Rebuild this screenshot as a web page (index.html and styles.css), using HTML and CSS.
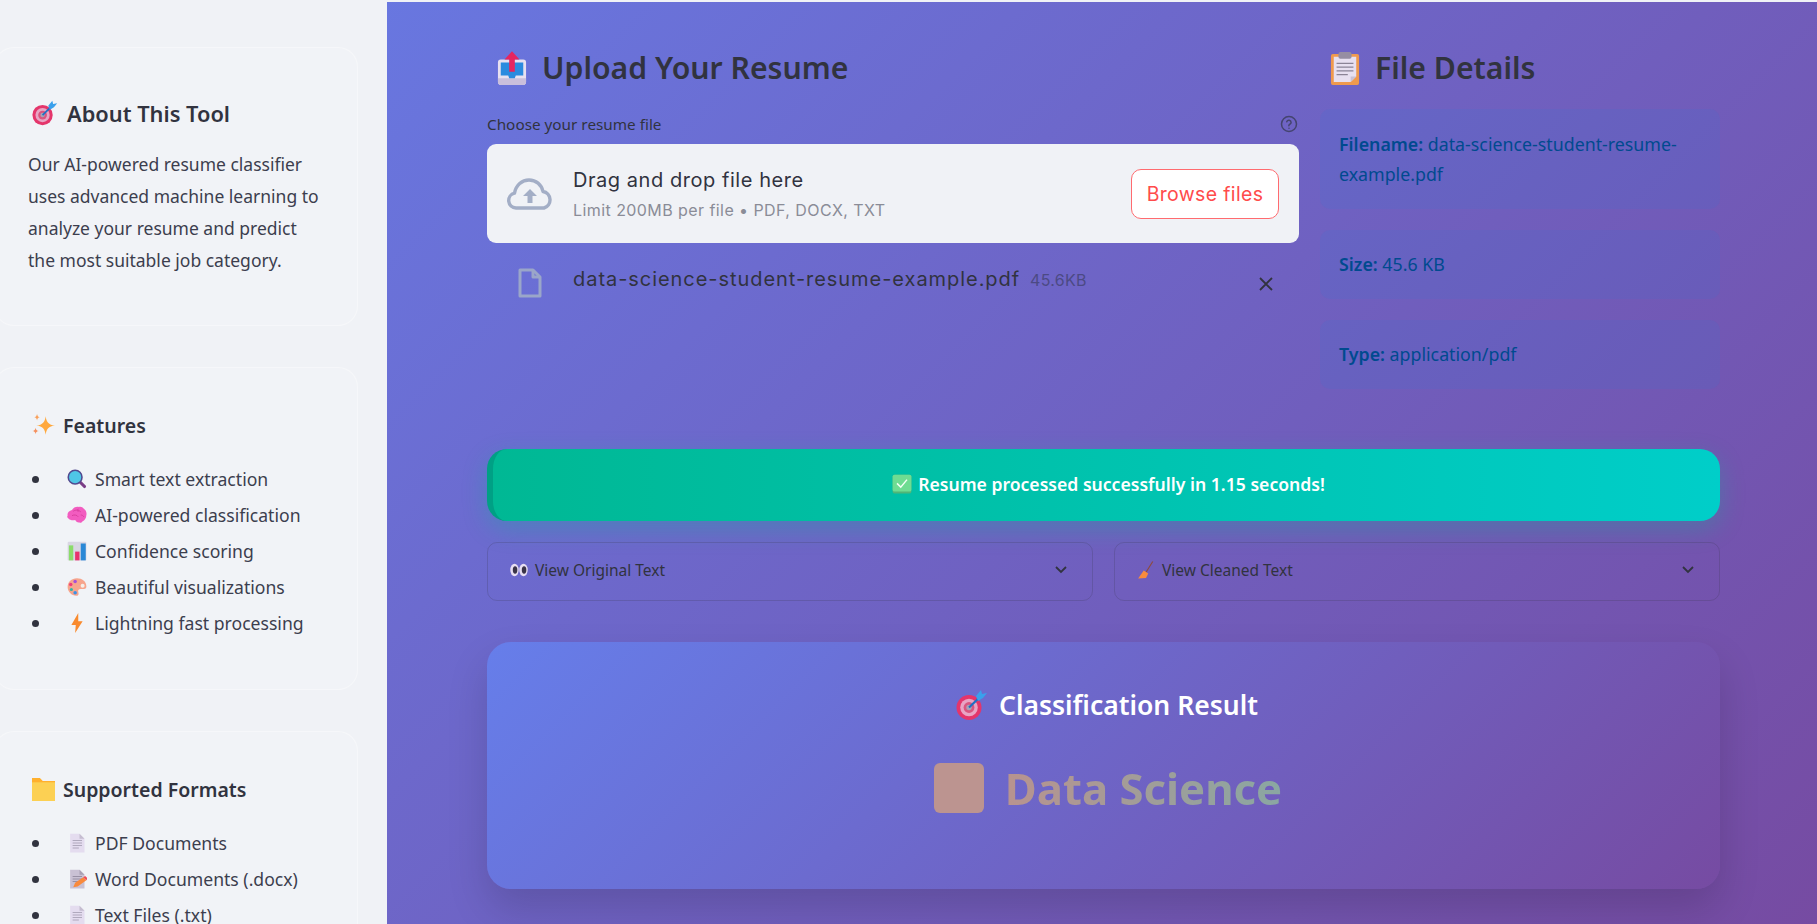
FILE: index.html
```html
<!DOCTYPE html>
<html lang="en">
<head>
  <meta charset="UTF-8">
  <meta name="viewport" content="width=device-width, initial-scale=1.0">
  <title>Resume Classifier</title>
  <link rel="stylesheet" href="styles.css">
</head>
<body>

  <!-- Emoji drawings, reused below -->
  <svg class="sprites" aria-hidden="true">
    <symbol id="e-target" viewBox="0 0 32 32">
      <circle cx="13" cy="18.500" r="12.500" fill="#e4356b"/>
      <circle cx="13" cy="18.500" r="8.800" fill="#e8a4c4"/>
      <circle cx="13" cy="18.500" r="5.400" fill="#d9557f"/>
      <circle cx="13" cy="18.500" r="2.700" fill="#a9a3b5"/>
      <path d="M13 18.500 25 7" stroke="#1f6fc4" stroke-width="2.200"/>
      <path d="M20 7l5-6 1 4 5-1-4 5-5 3z" fill="#3aa0ec"/>
    </symbol>
    <symbol id="e-sparkles" viewBox="0 0 32 32">
      <path d="M19 3c1 8 4 12 13 13-9 1-12 5-13 13-1-8-4-12-13-13 9-1 12-5 13-13z" fill="#ffa83d"/>
      <path d="M7 0c.5 3 1.500 4 4 4.500-2.500.5-3.500 1.500-4 4.500-.5-3-1.500-4-4-4.500 2.500-.5 3.500-1.500 4-4.500z" fill="#f9a05a"/>
      <path d="M5 19c.5 3 1.500 4 4.500 4.500-3 .5-4 1.500-4.500 4.500-.5-3-1.500-4-4.500-4.500 3-.5 4-1.500 4.500-4.500z" fill="#f58f5c"/>
    </symbol>
    <symbol id="e-search" viewBox="0 0 32 32">
      <path d="M20 20l8 8" stroke="#7a3c86" stroke-width="5" stroke-linecap="round"/>
      <circle cx="13" cy="13" r="11" fill="#4fc6e6" stroke="#51488f" stroke-width="2.500"/>
    </symbol>
    <symbol id="e-brain" viewBox="0 0 32 32">
      <path d="M8 8c2-4 7-6 11-5 3-1 6 0 8 3 3 2 5 6 4 10 0 5-3 9-6 10-1 2-3 3-5 2-3 1-6-2-7-4-4 1-9 0-11-3-2-1-2-3-1-4-1-4 2-8 7-9z" fill="#f25cc0"/>
      <path d="M10 10c4-3 9-2 12 1M8 17c4-2 8-1 10 2M22 16c2 0 4 1 5 3M18 6c-1 2-1 3 0 5" stroke="#d83e9e" stroke-width="1.500" fill="none"/>
    </symbol>
    <symbol id="e-chart" viewBox="0 0 32 32">
      <rect x="1" y="1" width="30" height="30" rx="2" fill="#d9d6e3"/>
      <rect x="3" y="7" width="7" height="24" fill="#8bdc6b"/>
      <rect x="13" y="17" width="7" height="14" fill="#e8336e"/>
      <rect x="22" y="4" width="8" height="27" fill="#2a88d6"/>
    </symbol>
    <symbol id="e-palette" viewBox="0 0 32 32">
      <path d="M16 2C7 2 1 8 1 16c0 7 6 14 14 14 4 0 4-3 3-6-1-3 1-5 4-5h5c3 0 4-2 4-4C31 7 24 2 16 2z" fill="#f7a58d"/>
      <circle cx="25" cy="14" r="3.200" fill="#f4efe9"/>
      <circle cx="13" cy="7" r="2.800" fill="#a64fd8"/>
      <circle cx="6" cy="12" r="2.800" fill="#ef3e79"/>
      <circle cx="7" cy="20" r="2.500" fill="#2fb8a8"/>
      <circle cx="13" cy="25" r="2.800" fill="#3a92e8"/>
    </symbol>
    <symbol id="e-bolt" viewBox="0 0 32 32">
      <path d="M18 0 7 19h7l-1 13 12-19h-7z" fill="#f98a2e"/>
    </symbol>
    <symbol id="e-folder" viewBox="0 0 32 32">
      <path d="M0 0h11l4 4h17v28H0z" fill="#ffb02e"/>
      <path d="M0 6h32v26H0z" fill="#fcd053"/>
    </symbol>
    <symbol id="e-page" viewBox="0 0 32 32">
      <path d="M5 1h15l8 8v22H5z" fill="#e4dcef"/>
      <path d="M20 1l8 8h-8z" fill="#c5bdd0"/>
      <path d="M9 12h15M9 16h15M9 20h15M9 24h10" stroke="#a49cb1" stroke-width="1.300"/>
    </symbol>
    <symbol id="e-write" viewBox="0 0 32 32">
      <path d="M5 1h15l8 8v22H5z" fill="#c9c1d4"/>
      <path d="M20 1l8 8h-8z" fill="#a9a1b4"/>
      <path d="M9 12h15M9 16h15M9 20h10" stroke="#8d859a" stroke-width="1.300"/>
      <path d="M10 29l3-7 13-9 5 5-14 10z" fill="#f98a3c"/>
      <path d="M26 13l5 5 2-3-4-4z" fill="#ef4d5a"/>
    </symbol>
    <symbol id="e-outbox" viewBox="0 0 32 36">
      <rect x="1" y="9" width="30" height="27" rx="3" fill="#e7e1f0"/>
      <path d="M1 29h30v4a3 3 0 0 1-3 3H4a3 3 0 0 1-3-3z" fill="#c9bfdc"/>
      <path d="M4 12h24v14h-8l-1 3h-6l-1-3H4z" fill="#2b8bdf"/>
      <path d="M16 0l8 9h-5v13h-6V9H8z" fill="#e6255f"/>
    </symbol>
    <symbol id="e-clipboard" viewBox="0 0 32 36">
      <rect x="1" y="3" width="30" height="33" rx="2" fill="#ef9a4e"/>
      <path d="M4 6h24v21l-6 6H4z" fill="#e7e0f0"/>
      <path d="M22 33v-6h6z" fill="#c9c1d4"/>
      <rect x="9" y="1" width="14" height="7" rx="2" fill="#968ea2"/>
      <path d="M7 13h18M7 17h18M7 21h18M7 25h12" stroke="#8b8496" stroke-width="1.300"/>
    </symbol>
    <symbol id="e-check" viewBox="0 0 32 32">
      <rect x="1" y="1" width="30" height="30" rx="3" fill="#50b577"/>
      <rect x="1" y="1" width="30" height="27" rx="3" fill="#6fdc92"/>
      <path d="M8 15l6 6 10-12" fill="none" stroke="#f2fff5" stroke-width="2.400"/>
    </symbol>
    <symbol id="e-eyes" viewBox="0 0 32 32">
      <ellipse cx="8" cy="16" rx="7.500" ry="11" fill="#e7def2"/>
      <ellipse cx="24" cy="16" rx="7.500" ry="11" fill="#e7def2"/>
      <ellipse cx="9" cy="16" rx="4" ry="6.500" fill="#3a3448"/>
      <ellipse cx="25" cy="16" rx="4" ry="6.500" fill="#3a3448"/>
    </symbol>
    <symbol id="e-broom" viewBox="0 0 32 32">
      <path d="M28 1 16 20" stroke="#8f4a3a" stroke-width="2"/>
      <path d="M12 17l8 5-4 8-14 1z" fill="#f98b3c"/>
    </symbol>
  </svg>

  <div class="app">

    <!-- Sidebar -->
    <aside class="sidebar">
      <section class="side-card about">
        <h3 class="side-title big"><svg class="emoji e26"><use href="#e-target"/></svg>About This Tool</h3>
        <p>Our AI-powered resume classifier uses advanced machine learning to analyze your resume and predict the most suitable job category.</p>
      </section>

      <section class="side-card features">
        <h3 class="side-title"><svg class="emoji e22"><use href="#e-sparkles"/></svg>Features</h3>
        <ul class="side-list">
          <li><svg class="emoji e20"><use href="#e-search"/></svg>Smart text extraction</li>
          <li><svg class="emoji e20"><use href="#e-brain"/></svg>AI-powered classification</li>
          <li><svg class="emoji e20"><use href="#e-chart"/></svg>Confidence scoring</li>
          <li><svg class="emoji e20"><use href="#e-palette"/></svg>Beautiful visualizations</li>
          <li><svg class="emoji e20"><use href="#e-bolt"/></svg>Lightning fast processing</li>
        </ul>
      </section>

      <section class="side-card formats">
        <h3 class="side-title"><svg class="emoji e22"><use href="#e-folder"/></svg>Supported Formats</h3>
        <ul class="side-list">
          <li><svg class="emoji e20"><use href="#e-page"/></svg>PDF Documents</li>
          <li><svg class="emoji e20"><use href="#e-write"/></svg>Word Documents (.docx)</li>
          <li><svg class="emoji e20"><use href="#e-page"/></svg>Text Files (.txt)</li>
        </ul>
      </section>
    </aside>

    <!-- Main area -->
    <main class="main">
      <div class="top-strip"></div>

      <div class="columns">
        <div class="upload-col">
          <h2 class="section-title"><svg class="emoji e34"><use href="#e-outbox"/></svg>Upload Your Resume</h2>

          <div class="file-label">
            <span>Choose your resume file</span>
            <svg class="help" viewBox="0 0 24 24" fill="none" stroke="#44446f" stroke-width="2" stroke-linecap="round">
              <circle cx="12" cy="12" r="10"/>
              <path d="M9 9a3 3 0 0 1 5.800 1c0 2-3 2.500-3 4.200"/>
              <path d="M12 17.500v.1"/>
            </svg>
          </div>

          <div class="dropzone">
            <svg class="cloud" viewBox="0 0 46 32" fill="none" stroke="#a3aec6" stroke-width="3.400" stroke-linejoin="round">
              <path d="M11 30H9a7.500 7.500 0 0 1-1.500-14.800C9 7 15 2 22 2c7 0 12.500 4.500 14 11.500a8.500 8.500 0 0 1 1 16.500z"/>
              <path d="M23 11l7 7h-4.500v7h-5v-7H16z" fill="#a3aec6" stroke="none"/>
            </svg>
            <div class="drop-text">
              <div class="drop-main">Drag and drop file here</div>
              <div class="drop-sub">Limit 200MB per file • PDF, DOCX, TXT</div>
            </div>
            <button class="browse" type="button">Browse files</button>
          </div>

          <div class="file-row">
            <svg class="file-icon" viewBox="0 0 24 30" fill="none" stroke="#9aa6c9" stroke-width="3" stroke-linejoin="round">
              <path d="M2 2h13l7 7v19H2z"/>
              <path d="M15 2v7h7"/>
            </svg>
            <span class="file-name">data-science-student-resume-example.pdf</span>
            <span class="file-size">45.6KB</span>
            <svg class="file-close" viewBox="0 0 16 16" stroke="#31333f" stroke-width="1.800">
              <path d="M2 2l12 12M14 2 2 14"/>
            </svg>
          </div>
        </div>

        <div class="details-col">
          <h2 class="section-title"><svg class="emoji e34"><use href="#e-clipboard"/></svg>File Details</h2>
          <div class="info-box tall"><strong>Filename:</strong> data-science-student-resume-example.pdf</div>
          <div class="info-box"><strong>Size:</strong> 45.6 KB</div>
          <div class="info-box"><strong>Type:</strong> application/pdf</div>
        </div>
      </div>

      <div class="success"><svg class="emoji e20"><use href="#e-check"/></svg>Resume processed successfully in 1.15 seconds!</div>

      <div class="expanders">
        <div class="expander">
          <svg class="emoji e18"><use href="#e-eyes"/></svg>
          <span>View Original Text</span>
          <svg class="chevron" viewBox="0 0 12 8" fill="none" stroke="#31333f" stroke-width="1.800"><path d="M1 1l5 5 5-5"/></svg>
        </div>
        <div class="expander">
          <svg class="emoji e18"><use href="#e-broom"/></svg>
          <span>View Cleaned Text</span>
          <svg class="chevron" viewBox="0 0 12 8" fill="none" stroke="#31333f" stroke-width="1.800"><path d="M1 1l5 5 5-5"/></svg>
        </div>
      </div>

      <section class="result">
        <h2 class="result-title"><svg class="emoji e30"><use href="#e-target"/></svg>Classification Result</h2>
        <div class="result-value">
          <span class="tofu"></span>
          <span class="result-name">Data Science</span>
        </div>
      </section>
    </main>

  </div>

</body>
</html>
```

FILE: styles.css
```css
/* General Reset */
* {
  margin: 0;
  padding: 0;
  box-sizing: border-box;
}

body {
  font-family: "Noto Sans", Arial, sans-serif;
  color: #31333f;
  overflow: hidden;
}

.sprites {
  display: none;
}

.app {
  display: grid;
  grid-template-columns: 387px 1fr;
  height: 924px;
  overflow: hidden;
  background: linear-gradient(135deg, #667eea 0%, #764ba2 100%);
}

/* Emoji sizes */
.emoji {
  flex: none;
}

.e18 { width: 18px; height: 18px; }
.e20 { width: 20px; height: 20px; }
.e22 { width: 23px; height: 23px; }
.e26 { width: 26px; height: 26px; }
.e30 { width: 32px; height: 32px; }
.e34 { width: 30px; height: 34px; }

/* Sidebar */
.sidebar {
  background: #f0f2f6;
  height: 924px;
  overflow: hidden;
  padding-top: 47px;
}

.side-card {
  width: 364px;
  margin-left: -6px;
  padding-left: 33px;
  padding-right: 20px;
  border: 1px solid rgba(255, 255, 255, 0.35);
  border-radius: 20px;
  background: rgba(255, 255, 255, 0.1);
}

.about {
  height: 279px;
  padding-top: 50px;
  margin-bottom: 41px;
}

.features {
  height: 323px;
  padding-top: 45px;
  margin-bottom: 41px;
}

.formats {
  height: 300px;
  padding-top: 45px;
}

.side-title {
  display: flex;
  align-items: center;
  gap: 8px;
  height: 24px;
  padding-left: 4px;
  font-size: 19.500px;
  font-weight: 600;
}

.side-title.big {
  gap: 9px;
  height: 30px;
  font-size: 21.800px;
}

.about p {
  max-width: 296px;
  margin-top: 20px;
  font-size: 17.500px;
  line-height: 32px;
  color: #3c3e4e;
}

.side-list {
  margin-top: 24px;
  list-style: none;
}

.side-list li {
  display: flex;
  align-items: center;
  height: 36px;
  font-size: 17.600px;
  color: #3c3e4e;
}

.side-list li::before {
  content: "";
  flex: none;
  width: 7px;
  height: 7px;
  margin-left: 4px;
  margin-right: 28px;
  border-radius: 50%;
  background: #31333f;
}

.side-list .emoji {
  margin-right: 8px;
}

/* Main */
.main {
  padding: 0 97px 0 100px;
  min-width: 0;
}

.top-strip {
  height: 2px;
  margin: 0 -97px 0 -100px;
  background: #f0f2f6;
}

.columns {
  display: grid;
  grid-template-columns: 812px 400px;
  gap: 21px;
  height: 447px;
}

.section-title {
  display: flex;
  align-items: center;
  gap: 15px;
  height: 42px;
  margin-top: 45px;
  padding-left: 10px;
  font-size: 30.200px;
  font-weight: 600;
  line-height: 44px;
}

/* Uploader */
.file-label {
  display: flex;
  justify-content: space-between;
  align-items: center;
  height: 20px;
  margin-top: 25px;
  font-size: 15.300px;
}

.help {
  width: 18px;
  height: 18px;
  margin-right: 1px;
}

.dropzone {
  display: flex;
  align-items: center;
  height: 99px;
  margin-top: 10px;
  padding: 0 20px;
  border-radius: 9px;
  background: #f0f2f6;
}

.cloud {
  flex: none;
  width: 46px;
  height: 32px;
}

.drop-text {
  flex: 1;
  margin-left: 20px;
  margin-top: 4px;
  font-family: Inter, Arial, sans-serif;
}

.drop-main {
  font-size: 20px;
  letter-spacing: 0.550px;
  line-height: 30px;
}

.drop-sub {
  font-size: 16px;
  letter-spacing: 0.430px;
  line-height: 31px;
  color: #8a8c97;
}

.browse {
  width: 148px;
  height: 50px;
  border: 1px solid #ff6b6f;
  border-radius: 10px;
  background: #fff;
  color: #ff4b4b;
  font-family: Inter, Arial, sans-serif;
  font-size: 19.500px;
  letter-spacing: 0.350px;
}

.file-row {
  display: flex;
  align-items: center;
  height: 30px;
  margin-top: 25px;
  padding-left: 31px;
  font-family: Inter, Arial, sans-serif;
}

.file-icon {
  flex: none;
  width: 24px;
  height: 30px;
}

.file-name {
  margin-left: 31px;
  margin-bottom: 8px;
  font-size: 20px;
  letter-spacing: 0.950px;
}

.file-size {
  margin-left: 10px;
  margin-bottom: 6px;
  font-size: 16px;
  letter-spacing: 0.300px;
  color: #4c4a84;
}

.file-close {
  width: 16px;
  height: 16px;
  margin-left: auto;
  margin-right: 25px;
  margin-top: 2px;
}

/* File details */
.info-box {
  height: 69px;
  margin-top: 21px;
  padding: 0 19px;
  border-radius: 10px;
  background: rgba(28, 131, 225, 0.1);
  font-size: 17.800px;
  line-height: 69px;
  color: #004a8f;
}

.info-box.tall {
  height: 100px;
  margin-top: 20px;
  padding-top: 20px;
  line-height: 30px;
}

.info-box strong {
  font-weight: 600;
}

/* Success banner */
.success {
  display: flex;
  justify-content: center;
  align-items: center;
  gap: 6px;
  height: 72px;
  padding-bottom: 2px;
  padding-left: 4px;
  border-left: 6px solid #00a085;
  border-radius: 20px;
  background: linear-gradient(90deg, #00b894, #00cec9);
  box-shadow: 0 8px 25px rgba(0, 184, 148, 0.3);
  color: #fff;
  font-size: 17.600px;
  font-weight: 600;
}

/* Expanders */
.expanders {
  display: grid;
  grid-template-columns: 1fr 1fr;
  gap: 21px;
  margin-top: 21px;
}

.expander {
  display: flex;
  align-items: center;
  gap: 7px;
  height: 59px;
  padding: 0 21px 3px 22px;
  border: 1px solid rgba(49, 51, 63, 0.2);
  border-radius: 10px;
  font-size: 15.500px;
}

.chevron {
  width: 12px;
  height: 8px;
  margin-left: auto;
  margin-right: 4px;
  margin-top: -1px;
}

/* Result card */
.result {
  height: 247px;
  margin-top: 41px;
  padding-top: 45px;
  border-radius: 24px;
  background: linear-gradient(135deg, #667eea 0%, #764ba2 100%);
  box-shadow: 0 20px 40px rgba(0, 0, 0, 0.15);
}

.result-title {
  display: flex;
  justify-content: center;
  align-items: center;
  gap: 11px;
  height: 36px;
  padding-left: 7px;
  color: #fff;
  font-size: 26.500px;
  font-weight: 600;
}

.result-value {
  display: flex;
  justify-content: center;
  align-items: center;
  gap: 21px;
  height: 50px;
  margin-top: 40px;
  padding-left: 9px;
}

.tofu {
  width: 50px;
  height: 50px;
  border-radius: 6px;
  background: #bc9490;
}

.result-name {
  font-size: 43.700px;
  font-weight: 700;
  background: linear-gradient(90deg, #b8938f, #8aa7a2);
  -webkit-background-clip: text;
  background-clip: text;
  color: transparent;
}
```
